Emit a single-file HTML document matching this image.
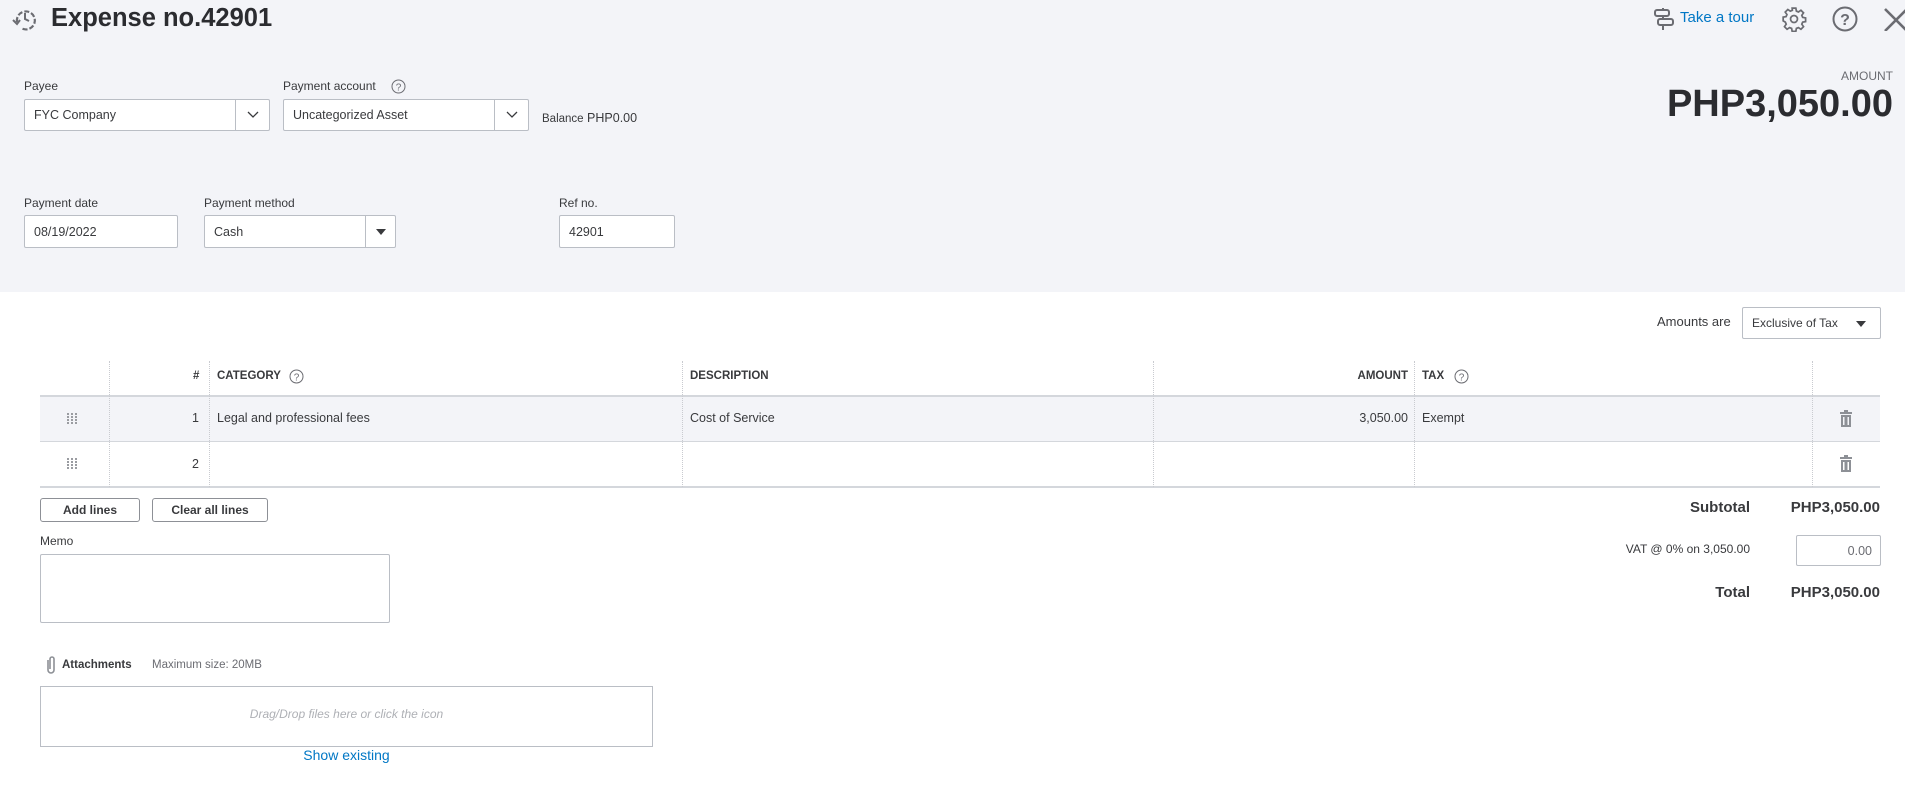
<!DOCTYPE html>
<html><head><meta charset="utf-8"><style>
*{box-sizing:border-box;margin:0;padding:0}
body{width:1905px;height:785px;overflow:hidden;background:#fff;font-family:"Liberation Sans",sans-serif;color:#393a3d;font-size:12.5px;position:relative}
.a{position:absolute;white-space:nowrap}
.hdr{position:absolute;left:0;top:0;width:1905px;height:292px;background:#f3f4f8}
.lbl{font-size:12px;color:#393a3d}
.inp{position:absolute;background:#fff;border:1px solid #babec5;border-radius:2px;font-size:12.5px;padding-left:9px;display:flex;align-items:center}
.dd{position:absolute;top:0;bottom:0;border-left:1px solid #babec5;display:flex;align-items:center;justify-content:center}
.vl{position:absolute;top:361px;height:126px;border-left:1px dotted #c9cbd0}
.btn{position:absolute;border:1px solid #8d9096;border-radius:3px;background:#fff;font-size:12px;font-weight:bold;display:flex;align-items:center;justify-content:center;color:#393a3d}
.b{font-weight:bold}
</style></head><body>
<div class="hdr"></div>
<svg class="a" style="left:11px;top:6px" width="28" height="26" viewBox="0 0 28 26"><path d="M6 16a9 9 0 1 1 4 6" fill="none" stroke="#6b6c72" stroke-width="2.2" stroke-dasharray="5 2"/><path d="M14 7v6l4 2" fill="none" stroke="#6b6c72" stroke-width="2"/><path d="M2 14l4 4 3-4" fill="none" stroke="#6b6c72" stroke-width="2"/></svg>
<div class="a b" style="left:51px;top:4px;font-size:25.5px;color:#2b2c30">Expense no.42901</div>

<svg class="a" style="left:1652px;top:7px" width="24" height="24" viewBox="0 0 24 24" fill="none" stroke="#6b6c72" stroke-width="2"><rect x="3" y="3" width="14" height="6" rx="2"/><rect x="6" y="12" width="15" height="6" rx="2"/><path d="M11 1v2M11 9v3M11 18v5"/></svg>
<div class="a" style="left:1680px;top:9px;font-size:15px;color:#0077c5">Take a tour</div>
<svg class="a" style="left:1781px;top:6px" width="26" height="26" viewBox="0 0 24 24" fill="none" stroke="#6b6c72" stroke-width="1.6"><circle cx="12" cy="12" r="3.2"/><path d="M10.3 2h3.4l.5 2.7 1.9.8 2.3-1.6 2.4 2.4-1.6 2.3.8 1.9 2.7.5v3.4l-2.7.5-.8 1.9 1.6 2.3-2.4 2.4-2.3-1.6-1.9.8-.5 2.7h-3.4l-.5-2.7-1.9-.8-2.3 1.6-2.4-2.4 1.6-2.3-.8-1.9L2 13.7v-3.4l2.7-.5.8-1.9-1.6-2.3 2.4-2.4 2.3 1.6 1.9-.8z"/></svg>
<svg class="a" style="left:1832px;top:6px" width="26" height="26" viewBox="0 0 26 26"><circle cx="13" cy="13" r="11.5" fill="none" stroke="#6b6c72" stroke-width="2"/><text x="13" y="19" text-anchor="middle" font-family="Liberation Sans" font-size="16" font-weight="bold" fill="#6b6c72">?</text></svg>
<svg class="a" style="left:1883px;top:7px" width="24" height="24" viewBox="0 0 24 24" stroke="#6b6c72" stroke-width="2.6"><path d="M2 2l22 22M24 2L2 24"/></svg>

<div class="a" style="right:12px;top:69px;font-size:12px;color:#6b6c72">AMOUNT</div>
<div class="a b" style="right:12px;top:83px;font-size:38px;color:#2b2c30">PHP3,050.00</div>

<div class="a lbl" style="left:24px;top:79px">Payee</div>
<div class="inp" style="left:24px;top:99px;width:246px;height:32px">FYC Company<div class="dd" style="left:210px;width:35px"><svg width="12" height="8"><path d="M1 1l5 5 5-5" fill="none" stroke="#393a3d" stroke-width="1.3"/></svg></div></div>
<div class="a lbl" style="left:283px;top:79px">Payment account</div>
<svg class="a" style="left:391px;top:79px" width="15" height="15"><circle cx="7.5" cy="7.5" r="6.5" fill="none" stroke="#6b6c72"/><text x="7.5" y="11.5" text-anchor="middle" font-size="10" fill="#6b6c72" font-family="Liberation Sans">?</text></svg>
<div class="inp" style="left:283px;top:99px;width:246px;height:32px">Uncategorized Asset<div class="dd" style="left:210px;width:35px"><svg width="12" height="8"><path d="M1 1l5 5 5-5" fill="none" stroke="#393a3d" stroke-width="1.3"/></svg></div></div>
<div class="a" style="left:542px;top:111px;font-size:12.5px"><span style="font-size:11.5px">Balance</span> PHP0.00</div>

<div class="a lbl" style="left:24px;top:196px">Payment date</div>
<div class="inp" style="left:24px;top:215px;width:154px;height:33px">08/19/2022</div>
<div class="a lbl" style="left:204px;top:196px">Payment method</div>
<div class="inp" style="left:204px;top:215px;width:192px;height:33px">Cash<div class="dd" style="left:160px;width:31px"><svg width="10" height="6"><path d="M0 0h10L5 6z" fill="#393a3d"/></svg></div></div>
<div class="a lbl" style="left:559px;top:196px">Ref no.</div>
<div class="inp" style="left:559px;top:215px;width:116px;height:33px">42901</div>

<div class="a" style="left:1657px;top:314px;font-size:13px">Amounts are</div>
<div class="inp" style="left:1742px;top:307px;width:139px;height:32px;font-size:12px">Exclusive of Tax<svg style="position:absolute;right:14px;top:13px" width="10" height="6"><path d="M0 0h10L5 6z" fill="#393a3d"/></svg></div>

<!-- table -->
<div class="a" style="left:40px;top:396px;width:1840px;height:45px;background:#f3f4f8"></div>
<div class="a" style="left:40px;top:395px;width:1840px;border-top:2px solid #d4d7dc"></div>
<div class="a" style="left:40px;top:441px;width:1840px;border-top:1px solid #d4d7dc"></div>
<div class="a" style="left:40px;top:486px;width:1840px;border-top:2px solid #d4d7dc"></div>
<div class="vl" style="left:109px"></div><div class="vl" style="left:209px"></div><div class="vl" style="left:682px"></div><div class="vl" style="left:1153px"></div><div class="vl" style="left:1414px"></div><div class="vl" style="left:1812px"></div>
<div class="a b" style="left:193px;top:370px;font-size:11.5px">#</div>
<div class="a b" style="left:217px;top:370px;font-size:11.5px">CATEGORY</div>
<svg class="a" style="left:289px;top:369px" width="15" height="15"><circle cx="7.5" cy="7.5" r="6.5" fill="none" stroke="#6b6c72"/><text x="7.5" y="11.5" text-anchor="middle" font-size="10" fill="#6b6c72" font-family="Liberation Sans">?</text></svg>
<div class="a b" style="left:690px;top:370px;font-size:11.5px">DESCRIPTION</div>
<div class="a b" style="right:497px;top:370px;font-size:11.5px">AMOUNT</div>
<div class="a b" style="left:1422px;top:370px;font-size:11.5px">TAX</div>
<svg class="a" style="left:1454px;top:369px" width="15" height="15"><circle cx="7.5" cy="7.5" r="6.5" fill="none" stroke="#6b6c72"/><text x="7.5" y="11.5" text-anchor="middle" font-size="10" fill="#6b6c72" font-family="Liberation Sans">?</text></svg>

<svg class="a" style="left:67px;top:413px" width="10" height="12" fill="#9a9ca1"><rect x="0" y="0" width="2" height="2"/><rect x="4" y="0" width="2" height="2"/><rect x="8" y="0" width="2" height="2"/><rect x="0" y="3" width="2" height="2"/><rect x="4" y="3" width="2" height="2"/><rect x="8" y="3" width="2" height="2"/><rect x="0" y="6" width="2" height="2"/><rect x="4" y="6" width="2" height="2"/><rect x="8" y="6" width="2" height="2"/><rect x="0" y="9" width="2" height="2"/><rect x="4" y="9" width="2" height="2"/><rect x="8" y="9" width="2" height="2"/></svg>
<svg class="a" style="left:67px;top:458px" width="10" height="12" fill="#9a9ca1"><rect x="0" y="0" width="2" height="2"/><rect x="4" y="0" width="2" height="2"/><rect x="8" y="0" width="2" height="2"/><rect x="0" y="3" width="2" height="2"/><rect x="4" y="3" width="2" height="2"/><rect x="8" y="3" width="2" height="2"/><rect x="0" y="6" width="2" height="2"/><rect x="4" y="6" width="2" height="2"/><rect x="8" y="6" width="2" height="2"/><rect x="0" y="9" width="2" height="2"/><rect x="4" y="9" width="2" height="2"/><rect x="8" y="9" width="2" height="2"/></svg>
<div class="a" style="right:1706px;top:411px">1</div>
<div class="a" style="right:1706px;top:457px">2</div>
<div class="a" style="left:217px;top:411px">Legal and professional fees</div>
<div class="a" style="left:690px;top:411px">Cost of Service</div>
<div class="a" style="right:497px;top:411px">3,050.00</div>
<div class="a" style="left:1422px;top:411px">Exempt</div>
<svg class="a" style="left:1839px;top:410px" width="14" height="17" viewBox="0 0 14 17" fill="#8d9096"><rect x="1" y="2" width="12" height="2"/><rect x="5" y="0" width="4" height="2"/><path d="M2 5h10v12H2z M4 7v8h1.5V7z M8.5 7v8H10V7z" fill-rule="evenodd"/></svg>
<svg class="a" style="left:1839px;top:455px" width="14" height="17" viewBox="0 0 14 17" fill="#8d9096"><rect x="1" y="2" width="12" height="2"/><rect x="5" y="0" width="4" height="2"/><path d="M2 5h10v12H2z M4 7v8h1.5V7z M8.5 7v8H10V7z" fill-rule="evenodd"/></svg>

<div class="btn" style="left:40px;top:498px;width:100px;height:24px">Add lines</div>
<div class="btn" style="left:152px;top:498px;width:116px;height:24px">Clear all lines</div>

<div class="a b" style="right:155px;top:499px;font-size:15px">Subtotal</div>
<div class="a b" style="right:25px;top:499px;font-size:15px">PHP3,050.00</div>
<div class="a" style="right:155px;top:542px;font-size:12px">VAT @ 0% on 3,050.00</div>
<div class="inp" style="left:1796px;top:535px;width:85px;height:31px;justify-content:flex-end;padding-right:8px;color:#6b6c72">0.00</div>
<div class="a b" style="right:155px;top:584px;font-size:15px">Total</div>
<div class="a b" style="right:25px;top:584px;font-size:15px">PHP3,050.00</div>

<div class="a lbl" style="left:40px;top:534px;font-size:12px">Memo</div>
<div class="inp" style="left:40px;top:554px;width:350px;height:69px"></div>

<svg class="a" style="left:45px;top:655px" width="12" height="20" viewBox="0 0 12 20"><path d="M3 5v10a3 3 0 0 0 6 0V4a2 2 0 0 0-4 0v10" fill="none" stroke="#8d9096" stroke-width="1.6"/></svg>
<div class="a b" style="left:62px;top:659px;font-size:11.5px">Attachments</div>
<div class="a" style="left:152px;top:659px;font-size:11.5px;color:#6b6c72">Maximum size: 20MB</div>
<div class="a" style="left:40px;top:686px;width:613px;height:61px;border:1px solid #babec5"></div>
<div class="a" style="left:40px;top:707px;width:613px;text-align:center;font-style:italic;color:#aeb0b5;font-size:12px">Drag/Drop files here or click the icon</div>
<div class="a" style="left:40px;top:747px;width:613px;text-align:center;color:#0077c5;font-size:14px">Show existing</div>
</body></html>
